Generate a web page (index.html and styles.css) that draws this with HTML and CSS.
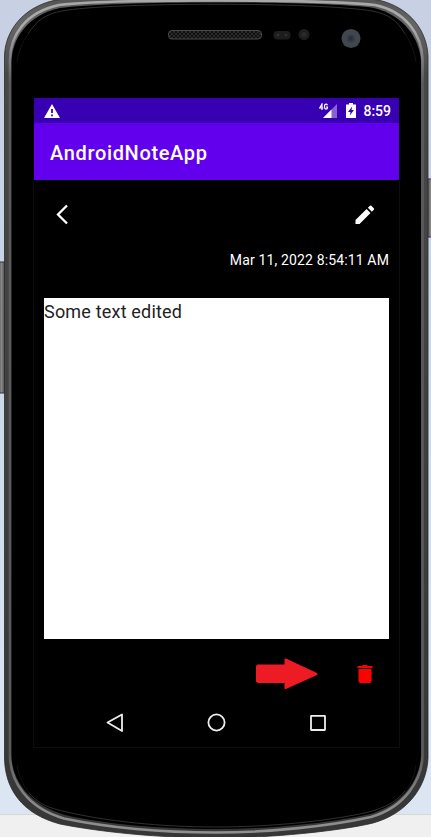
FILE: index.html
```html
<!DOCTYPE html>
<html lang="en">
<head>
<meta charset="utf-8">
<title>AndroidNoteApp</title>
<link rel="stylesheet" href="styles.css">
</head>
<body>
<svg class="device" width="431" height="837" viewBox="0 0 431 837" aria-hidden="true">
  <defs>
    <linearGradient id="rim" x1="0" y1="0" x2="0" y2="837" gradientUnits="userSpaceOnUse">
      <stop offset="0" stop-color="#555"/><stop offset=".03" stop-color="#666"/><stop offset=".09" stop-color="#484848"/><stop offset="1" stop-color="#363636"/>
    </linearGradient>
    <linearGradient id="shine" x1="0" y1="0" x2="0" y2="837" gradientUnits="userSpaceOnUse">
      <stop offset="0" stop-color="#a8a8a8"/><stop offset=".035" stop-color="#aaa"/><stop offset=".1" stop-color="#5b5b5b"/><stop offset=".9" stop-color="#5b5b5b"/><stop offset=".96" stop-color="#8a8a8a"/><stop offset="1" stop-color="#909090"/>
    </linearGradient>
    <linearGradient id="key"><stop offset="0" stop-color="#333"/><stop offset=".5" stop-color="#888"/><stop offset="1" stop-color="#333"/></linearGradient>
    <pattern id="mesh" x="169" y="31" width="4" height="4" patternUnits="userSpaceOnUse"><rect width="4" height="4" fill="#111"/><circle cx="1" cy="1" r=".8" fill="#484848"/><circle cx="3" cy="3" r=".8" fill="#484848"/></pattern>
  </defs>
  <rect x="-3" y="262" width="9" height="131" rx="2" fill="url(#key)" stroke="#333"/>
  <rect x="426" y="179" width="9" height="58" rx="2" fill="url(#key)" stroke="#333"/>
  <path fill="url(#rim)" stroke="#292929" stroke-width=".8" d="M4.500 56C5 32 22 7 56 0C110-7 320-7 378 0C410 7 427 31 428 56V758C427 785 409 813 373 823C340 831 270 838 216 838C160 838 100 832 60 824C22 814 5 789 4.500 758Z"/>
  <path fill="none" stroke="url(#shine)" stroke-width="2.600" d="M10 60C10 35 26 12 59 5C110-1 320-1 375 5C405 11 422 34 422.500 60V755C422 780 405 807 371 817C330 826 270 832.500 216 832.500C160 832.500 105 827 64 818.500C27 808 10 781 10 755Z"/>
  <path fill="#000" d="M11.500 62C12 38 28 15 60 8C110 .5 320 .5 374 8C403 15 420 38 421 62V755C420 780 403 804 370 814C330 823 270 829 216 829C160 829 105 824 65 815C28 804 12 780 11.500 755Z"/>
  <path fill="none" stroke="#303030" d="M28 34C37 20 46 14 62 11C110 2 320 2 372 11C388 14 397 20 405 34M29 793C39 804 48 808 67 812C105 821 160 827 216 827C270 827 330 821 369 812C386 807 396 802 405 791"/>
  <path fill="none" stroke="#131313" d="M17 62Q19 47 28 34M405 34Q414 47 416 62M17 765Q20 782 29 793M405 791Q414 781 416 765"/>
  <path fill="none" stroke="#0d0d0d" d="M33.500 181V747.500H399.500V181"/>
  <rect x="168.500" y="30.500" width="93" height="8.500" rx="3.500" fill="url(#mesh)" stroke="#494949"/>
  <rect x="273.500" y="31" width="17" height="8.500" rx="4" fill="#1d1d1d"/><circle cx="278" cy="35" r="1.500" fill="#303030"/><circle cx="286" cy="35" r="1.500" fill="#303030"/>
  <circle cx="304" cy="34.500" r="5.500" fill="#1e1e1e"/><circle cx="304" cy="34.500" r="2.500" fill="#2a2a2a"/>
  <circle cx="351" cy="38.500" r="9.500" fill="#41474e"/><circle cx="351" cy="38.500" r="4" fill="#343c45"/><circle cx="351" cy="38.500" r="2" fill="#28313b"/>
</svg>
<main class="screen">
  <div class="status">
    <svg class="warning" width="16" height="14" viewBox="0 0 16 14"><path fill="#fff" d="M8 0L16 14H0Z"/><path stroke="#3700b3" stroke-width="1.800" d="M8 5V9M8 10.500V12.200"/></svg>
    <svg class="signal" width="19" height="16" viewBox="0 0 19 16"><path fill="#8764d1" d="M18 1V15H4Z"/><path fill="#3700b3" d="M0 0H10V7H0Z"/><path fill="#fff" d="M12.500 6.500V15H4Z"/><path fill="none" stroke="#fff" stroke-width="1.200" d="M3 7V1L.7 5H4.300M8.500 2.200Q8 1.200 7 1.200Q5.500 1.200 5.500 3.500T7 6.200Q8.500 6.200 8.500 4H7"/></svg>
    <svg class="battery" width="10" height="15" viewBox="0 0 10 15"><path fill="#fff" d="M3 0H7V1.500H10V15H0V1.500H3Z"/><path fill="#3700b3" d="M6.200 3.500L2 9H4.500L3.800 12.500L8 7H5.500Z"/></svg>
    <span class="clock">8:59</span>
  </div>
  <header class="appbar">AndroidNoteApp</header>
  <div class="tools">
    <svg width="14" height="22" viewBox="0 0 14 22"><path fill="none" stroke="#fff" stroke-width="2.300" d="M12 1.500L3 10.500L12 19.500"/></svg>
    <svg width="20" height="20" viewBox="0 0 20 20"><path fill="#fff" d="M.5 15V19H4.500L15.500 8L11.600 4.100ZM18.800 4.700Q19.500 4 18.800 3.300L16.300.8Q15.600.1 14.900.8L12.900 2.800L16.800 6.700Z"/></svg>
  </div>
  <time class="date">Mar 11, 2022 8:54:11 AM</time>
  <article class="note">Some text edited</article>
  <div class="actions">
    <svg class="arrow" width="62" height="32" viewBox="0 0 62 32"><path fill="#ed1c24" stroke="#ed1c24" stroke-width="2" stroke-linejoin="round" d="M2 7.500H29.500V1.500L60.500 16L29.500 30V24H2L1 23V8.500Z"/></svg>
    <svg width="16" height="18" viewBox="0 0 16 18"><path fill="#f00" d="M1.500 4H14.500V16Q14.500 18 12.500 18H3.500Q1.500 18 1.500 16ZM.5 1H5L6 0H10L11 1H15.500V3H.5Z"/></svg>
  </div>
  <nav class="navigation">
    <svg width="18" height="20" viewBox="0 0 18 20"><path fill="none" stroke="#eee" stroke-width="1.800" stroke-linejoin="round" d="M16 1.500V18L1.500 9.500Z"/></svg>
    <svg width="20" height="20" viewBox="0 0 20 20"><circle cx="9.500" cy="9.500" r="8.100" fill="none" stroke="#eee" stroke-width="1.800"/></svg>
    <svg width="18" height="18" viewBox="0 0 18 18"><rect x="2" y="1.800" width="14" height="14.200" rx=".4" fill="none" stroke="#eee" stroke-width="1.800"/></svg>
  </nav>
</main>
</body>
</html>
```
FILE: styles.css
```css
* { box-sizing: border-box; }
body {
  margin: 0;
  width: 431px;
  height: 837px;
  overflow: hidden;
  padding: 98px 32px 0 34px;
  background: linear-gradient(#c8d0e3 0, #c8d4e6 300px, #dce6f3 740px, #dce6f3 814px, #d7d7d7 814px, #d7d7d7 815px, #f0f0f0 815px);
  font-family: Roboto, sans-serif;
}
svg { display: block; flex: none; }
.device { position: absolute; inset: 0; z-index: -1; }
.screen { width: 365px; height: 649px; color: #fff; }
.status {
  display: flex;
  height: 25px;
  padding: 0 8px 0 10px;
  align-items: center;
  background: #3700b3;
}
.signal { margin-left: auto; }
.battery { margin: 0 7px 0 8px; }
.clock { font-size: 14px; font-weight: 500; line-height: 25px; padding-top: 2px; }
.appbar {
  height: 57px;
  padding: 2px 16px 0;
  background: #6200ee;
  font-size: 20px;
  font-weight: 500;
  line-height: 56px;
  letter-spacing: .65px;
}
.tools {
  display: flex;
  align-items: center;
  justify-content: space-between;
  height: 70px;
  padding: 0 24px 1px 21px;
}
.date {
  display: block;
  height: 48px;
  padding-right: 10px;
  font-size: 14px;
  line-height: 20px;
  letter-spacing: .14px;
  text-align: right;
}
.note {
  height: 341px;
  margin: 0 10px;
  background: #fff;
  color: #222;
  font-size: 18px;
  letter-spacing: .19px;
  line-height: 27px;
}
.actions {
  display: flex;
  height: 70px;
  align-items: center;
  justify-content: flex-end;
  gap: 39px;
  padding-right: 26px;
}
.navigation {
  display: flex;
  height: 28px;
  align-items: center;
  justify-content: space-between;
  padding: 0 72px;
}
```
